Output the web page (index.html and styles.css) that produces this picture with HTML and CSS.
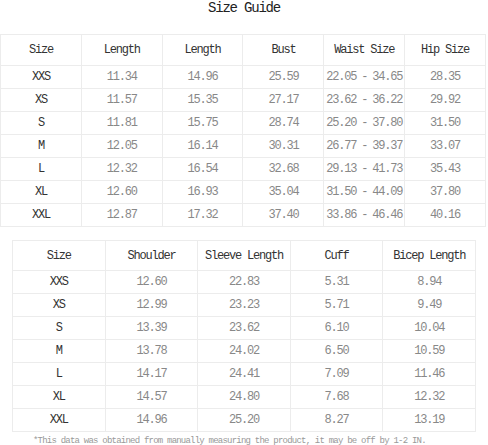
FILE: index.html
```html
<!DOCTYPE html>
<html>
<head>
<meta charset="utf-8">
<link rel="stylesheet" href="styles.css">
</head>
<body>
<div class="page">
  <h1 class="title">Size Guide</h1>
  <table class="grid grid-one">
    <thead>
      <tr class="head"><th>Size</th><th>Length</th><th>Length</th><th>Bust</th><th>Waist Size</th><th>Hip Size</th></tr>
    </thead>
    <tbody>
      <tr><th>XXS</th><td>11.34</td><td>14.96</td><td>25.59</td><td class="range">22.05 - 34.65</td><td>28.35</td></tr>
      <tr><th>XS</th><td>11.57</td><td>15.35</td><td>27.17</td><td class="range">23.62 - 36.22</td><td>29.92</td></tr>
      <tr><th>S</th><td>11.81</td><td>15.75</td><td>28.74</td><td class="range">25.20 - 37.80</td><td>31.50</td></tr>
      <tr><th>M</th><td>12.05</td><td>16.14</td><td>30.31</td><td class="range">26.77 - 39.37</td><td>33.07</td></tr>
      <tr><th>L</th><td>12.32</td><td>16.54</td><td>32.68</td><td class="range">29.13 - 41.73</td><td>35.43</td></tr>
      <tr><th>XL</th><td>12.60</td><td>16.93</td><td>35.04</td><td class="range">31.50 - 44.09</td><td>37.80</td></tr>
      <tr><th>XXL</th><td>12.87</td><td>17.32</td><td>37.40</td><td class="range">33.86 - 46.46</td><td>40.16</td></tr>
    </tbody>
  </table>
  <table class="grid grid-two">
    <thead>
      <tr class="head"><th>Size</th><th>Shoulder</th><th>Sleeve Length</th><th>Cuff</th><th>Bicep Length</th></tr>
    </thead>
    <tbody>
      <tr><th>XXS</th><td>12.60</td><td>22.83</td><td>5.31</td><td>8.94</td></tr>
      <tr><th>XS</th><td>12.99</td><td>23.23</td><td>5.71</td><td>9.49</td></tr>
      <tr><th>S</th><td>13.39</td><td>23.62</td><td>6.10</td><td>10.04</td></tr>
      <tr><th>M</th><td>13.78</td><td>24.02</td><td>6.50</td><td>10.59</td></tr>
      <tr><th>L</th><td>14.17</td><td>24.41</td><td>7.09</td><td>11.46</td></tr>
      <tr><th>XL</th><td>14.57</td><td>24.80</td><td>7.68</td><td>12.32</td></tr>
      <tr><th>XXL</th><td>14.96</td><td>25.20</td><td>8.27</td><td>13.19</td></tr>
    </tbody>
  </table>
  <p class="note">*This data was obtained from manually measuring the product, it may be off by 1-2 IN.</p>
</div>
</body>
</html>
```

FILE: styles.css
```css
html, body {
  margin: 0;
  padding: 0;
  background: #ffffff;
}

.page {
  width: 488px;
  height: 445px;
  overflow: hidden;
  font-family: "Liberation Mono", "DejaVu Sans Mono", monospace;
}

.title {
  margin: 0;
  height: 34px;
  font-size: 14px;
  line-height: 16px;
  font-weight: normal;
  letter-spacing: -1.2px;
  color: #222;
  text-align: center;
}

.grid {
  border-collapse: collapse;
  table-layout: fixed;
  font-size: 12px;
  letter-spacing: -1.2px;
}

.grid th,
.grid td {
  border: 1px solid #ececec;
  padding: 0;
  text-align: center;
  vertical-align: middle;
  font-weight: normal;
  white-space: nowrap;
}

.grid th {
  color: #333;
}

.grid td {
  color: #888;
}

.grid td.range {
  word-spacing: -1px;
}

.grid tbody tr {
  height: 23px;
}

.grid-one {
  width: 486px;
  margin: 0;
}

.grid-one .head {
  height: 31px;
}

.grid-two {
  width: 464px;
  margin: 13px 0 0 12px;
}

.grid-two .head {
  height: 30px;
}

.note {
  margin: 2px 0 0 33px;
  font-size: 9px;
  line-height: 14px;
  letter-spacing: -0.78px;
  color: #999;
  white-space: nowrap;
}
```
